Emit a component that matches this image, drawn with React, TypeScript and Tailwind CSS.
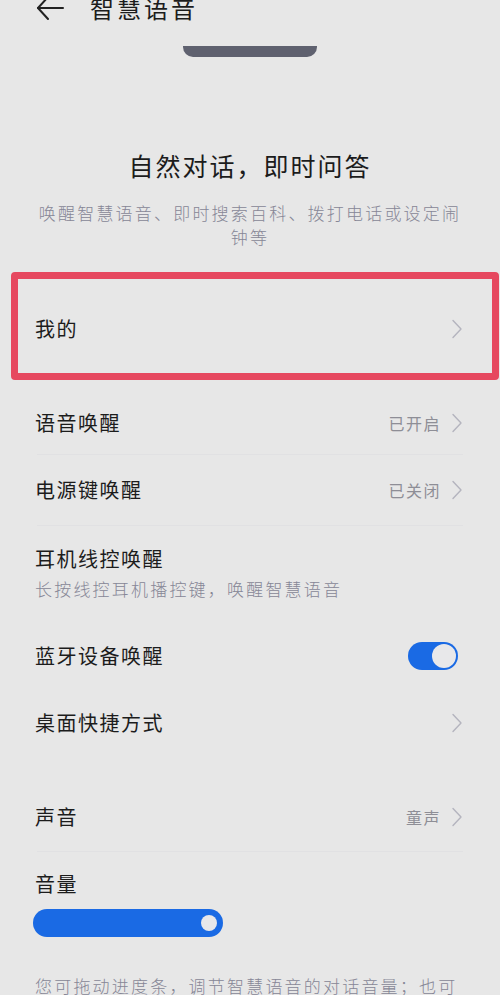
import type { ReactNode } from 'react'

const FONT = "font-['Noto_Sans_CJK_SC','Noto_Sans',sans-serif]"

function Chevron() {
  return (
    <svg viewBox="0 0 12 20" className="h-[20px] w-[12px] text-[#b4b4be]" fill="none" stroke="currentColor" strokeWidth="1.4" strokeLinecap="round" strokeLinejoin="round">
      <path d="M2 1.5 10 10 2 18.5" />
    </svg>
  )
}

function Separator() {
  return <div className="mx-[37px] h-px bg-[#e1e1e3]" />
}

function Row({ label, value, right, className = '' }: { label: string; value?: string; right?: ReactNode; className?: string }) {
  return (
    <div className={`flex items-center justify-between pl-[35px] pr-[37px] ${className}`}>
      <span className="text-[20px] leading-[28px] tracking-[1.5px] text-[#1c1c1c]">{label}</span>
      <div className="flex items-center gap-[10px]">
        {value && <span className="text-[16px] leading-[24px] tracking-[1.5px] text-[#8e8e96]">{value}</span>}
        {right ?? <Chevron />}
      </div>
    </div>
  )
}

export default function App() {
  return (
    <div className={`h-[995px] w-[500px] overflow-hidden bg-[#e7e7e7] ${FONT}`}>
      <header className="-mt-[12px] flex h-[40px] items-center">
        <svg viewBox="0 0 28 26" className="ml-[36px] h-[26px] w-[28px] text-[#222]" fill="none" stroke="currentColor" strokeWidth="2" strokeLinecap="round" strokeLinejoin="round">
          <path d="M2 13h25" />
          <path d="M12 2 2 13l10 11" />
        </svg>
        <h1 className="ml-[26px] text-[24px] leading-[32px] tracking-[3px] text-[#1c1c1c]">智慧语音</h1>
      </header>

      <div className="mt-[18px] flex justify-center">
        <div className="h-[11px] w-[134px] rounded-b-[10px] bg-[#5f616f]" />
      </div>

      <h2 className="mt-[92px] text-center text-[25px] leading-[32px] tracking-[2px] text-[#1c1c1c]">
        自然对话，即时问答
      </h2>
      <p className="mt-[20px] px-[32px] text-center text-[17px] font-light leading-[24px] tracking-[2.2px] text-[#868696]">
        唤醒智慧语音、即时搜索百科、拨打电话或设定闹钟等
      </p>

      <div className="mr-[1px] ml-[11px] mt-[23px] flex h-[108px] items-center justify-between rounded-[4px] border-[7px] border-[#e6485f] pt-[6px] pr-[29px] pl-[17px]">
        <span className="text-[20px] leading-[28px] tracking-[1.5px] text-[#1c1c1c]">我的</span>
        <Chevron />
      </div>

      <Row label="语音唤醒" value="已开启" className="mt-[16px] h-[58px] pb-[4px]" />
      <Separator />
      <Row label="电源键唤醒" value="已关闭" className="h-[70px]" />
      <Separator />

      <div className="pt-[19px] pl-[35px]">
        <div className="text-[20px] leading-[28px] tracking-[1.5px] text-[#1c1c1c]">耳机线控唤醒</div>
        <div className="mt-[4px] text-[17px] font-light leading-[24px] tracking-[2.2px] text-[#868696]">
          长按线控耳机播控键，唤醒智慧语音
        </div>
      </div>

      <Row
        label="蓝牙设备唤醒"
        className="mt-[23px] h-[64px] pr-[42px]"
        right={
          <div className="flex h-[28px] w-[50px] items-center justify-end rounded-full bg-[#1a6ae4] px-[2px]">
            <div className="h-[24px] w-[24px] rounded-full bg-[#e8e8ea]" />
          </div>
        }
      />
      <Row label="桌面快捷方式" className="h-[70px] pb-[1px]" />

      <Row label="声音" value="童声" className="mt-[27px] h-[66px] pb-[2px]" />
      <Separator />

      <div className="mt-[18px] pl-[35px] text-[20px] leading-[28px] tracking-[1.5px] text-[#1c1c1c]">音量</div>
      <div className="mt-[11px] ml-[33px] flex h-[28px] w-[190px] items-center justify-end rounded-full bg-[#1a6ae4] pr-[6px]">
        <div className="h-[16px] w-[16px] rounded-full bg-[#e8e8ea]" />
      </div>

      <p className="mt-[36px] px-[35px] text-[17px] font-light leading-[26px] tracking-[2.2px] text-[#868696]">
        您可拖动进度条，调节智慧语音的对话音量；也可通过音量键调节
      </p>
    </div>
  )
}
